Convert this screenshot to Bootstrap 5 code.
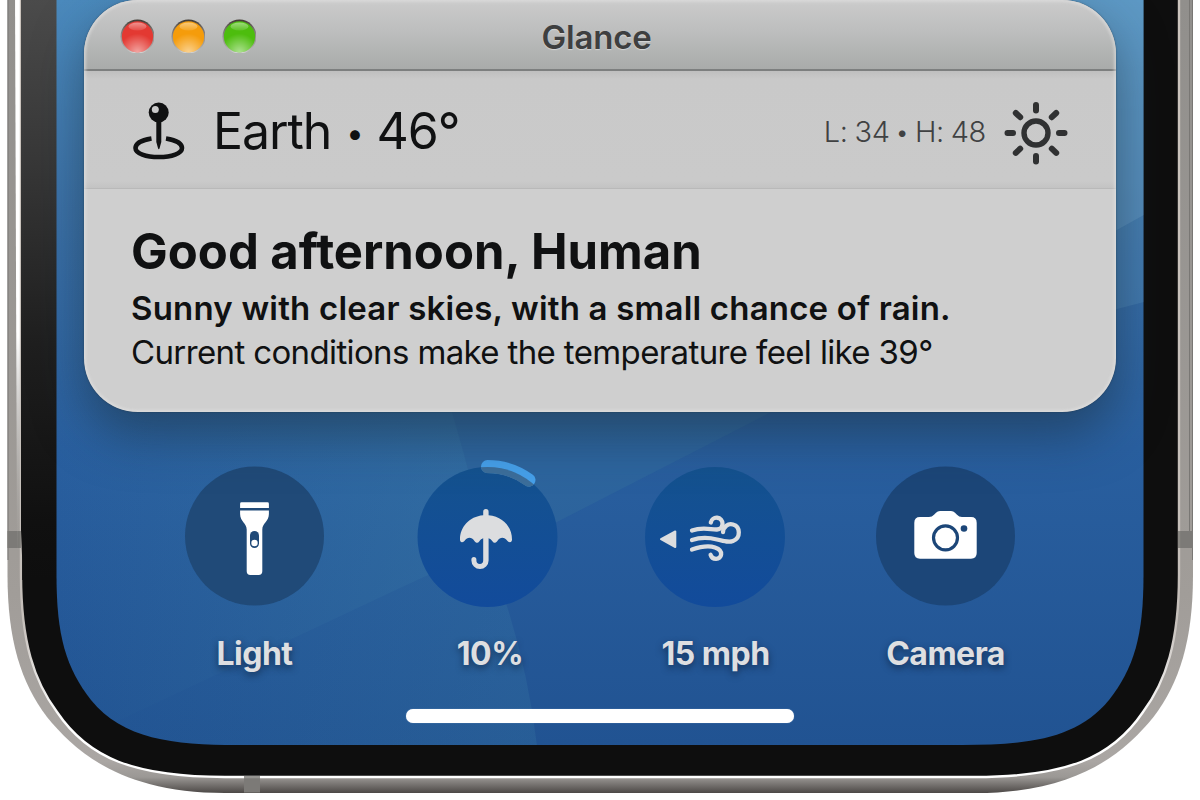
<!DOCTYPE html>
<html lang="en">
<head>
<meta charset="utf-8">
<meta name="viewport" content="width=device-width, initial-scale=1">
<title>Glance</title>
<link rel="stylesheet" href="https://cdn.jsdelivr.net/npm/bootstrap@5.3.0/dist/css/bootstrap.min.css">
<style>
  body { font-family: Inter, "Liberation Sans", sans-serif; color: #101112; background: #fff; }
  .stage { width: 1200px; height: 800px; }
  .glance { width: 1032px; height: 412px; margin-left: 84px; border-radius: 54px; background: #cfcfcf;
    box-shadow: 0 22px 50px rgba(24,42,54,.5), 0 0 2px rgba(40,60,80,.7); }
  .glance::after { content: ""; position: absolute; inset: 0; border-radius: inherit; pointer-events: none;
    box-shadow: inset 0 0 3px 2px rgba(226,226,226,.6); }
  .titlebar { height: 71px; background: linear-gradient(#cbcbcb, #bdbebe 45%, #a9abaa); border-bottom: 2px solid #7d7f7f; }
  .titlebar h1 { font-size: 33px; font-weight: 600; color: #3e3f40; letter-spacing: -.2px; text-shadow: 0 1px 1px rgba(235,235,235,.6); margin-top: 2px; padding-right: 7px; line-height: 70px; }
  .lights { left: 36px; top: 19px; gap: 17px; }
  .lamp { width: 34px; height: 34px; }
  .place { height: 118px; padding: 4px 47px 0 46px; background: linear-gradient(#bfbfbf, #c9c9c9 8px, #cacaca 94%, #c3c3c3); border-bottom: 1px solid #b9b9b9; }
  .town { font-size: 50px; letter-spacing: -1.1px; margin-left: 25px; margin-top: 5px; line-height: 60px; }
  .town .sep { font-size: 31px; letter-spacing: 0; margin: 0 0 0 2px; position: relative; top: -5px; }
  .range { font-size: 29px; letter-spacing: -.35px; word-spacing: -1px; color: #404142; font-weight: 300; margin-right: 17px; }
  .range .sep { font-size: 21px; letter-spacing: 0; position: relative; top: -2px; font-weight: 400; }
  .report { padding: 33px 47px 0; }
  .report h2 { font-size: 49px; font-weight: 700; letter-spacing: 0; line-height: 60px; }
  .outlook { font-size: 33px; font-weight: 600; letter-spacing: .2px; line-height: 44px; margin-top: 4px; }
  .feels { font-size: 33px; letter-spacing: -.63px; line-height: 44px; }
  .dials { margin-left: 134px; height: 296px; padding-top: 45px; }
  .dial svg { overflow: visible; }
  .caption-text { font-size: 32px; font-weight: 700; color: #dedfe1; line-height: 40px; margin-top: 17px; letter-spacing: -.5px; text-shadow: 0 3px 7px rgba(10,25,45,.6); }
  .home { width: 388px; height: 14px; margin-left: 406px; margin-top: 1px; box-shadow: 0 0 1px #9bb4d4; }
</style>
</head>
<body class="overflow-hidden">
<main class="stage position-relative overflow-hidden">
  <svg class="position-absolute top-0 start-0" width="1200" height="800" viewBox="0 0 1200 800" aria-hidden="true">
    <defs>
      <linearGradient id="sky" x1="0" y1="0" x2="0" y2="1">
        <stop offset="0" stop-color="#4b8abd"/><stop offset=".28" stop-color="#3c72a9"/><stop offset=".6" stop-color="#295f9f"/><stop offset="1" stop-color="#215392"/>
      </linearGradient>
      <linearGradient id="beamAcross" x1="56" y1="0" x2="470" y2="0" gradientUnits="userSpaceOnUse">
        <stop offset="0" stop-color="#448aab" stop-opacity="0"/><stop offset="1" stop-color="#448aab" stop-opacity=".3"/>
      </linearGradient>
      <linearGradient id="beamLow" x1="56" y1="0" x2="520" y2="0" gradientUnits="userSpaceOnUse">
        <stop offset="0" stop-color="#448aab" stop-opacity="0"/><stop offset="1" stop-color="#448aab" stop-opacity=".18"/>
      </linearGradient>
      <linearGradient id="bezel" x1="0" y1="0" x2="0" y2="1">
        <stop offset="0" stop-color="#4c4c4c"/><stop offset=".3" stop-color="#373737"/><stop offset=".6" stop-color="#1f1f1f"/><stop offset=".9" stop-color="#101010"/><stop offset="1" stop-color="#0e0e0e"/>
      </linearGradient>
      <linearGradient id="shine" x1="0" y1="0" x2="0" y2="560" gradientUnits="userSpaceOnUse">
        <stop offset="0" stop-color="#fff"/><stop offset=".6" stop-color="#fff"/><stop offset="1" stop-color="#aaa7a3" stop-opacity="0"/>
      </linearGradient>
      <linearGradient id="metal" x1="0" y1="0" x2="0" y2="793" gradientUnits="userSpaceOnUse">
        <stop offset="0" stop-color="#918f8c"/><stop offset=".75" stop-color="#a19d99"/><stop offset=".96" stop-color="#aaa6a3"/><stop offset=".98" stop-color="#9b9895"/><stop offset="1" stop-color="#4c4846"/>
      </linearGradient>
      <linearGradient id="rim" x1="0" y1="0" x2="0" y2="777" gradientUnits="userSpaceOnUse">
        <stop offset="0" stop-color="#cbc4bd"/><stop offset=".8" stop-color="#c5bfba"/><stop offset=".93" stop-color="#fff"/><stop offset="1" stop-color="#fff"/>
      </linearGradient>
      <clipPath id="screen"><path d="M56.500-10V575C56.500 636 66 668 91 700 123 739 172 745 238 745H962C1028 745 1077 739 1109 700 1134 668 1143.500 636 1143.500 575V-10Z"/></clipPath>
    </defs>
    <path fill="url(#metal)" d="M7.500-10V575C7.500 640 21 683 47 717 77 754 124 793 225 793H975.500C1076.500 793 1123.500 754 1153.500 717 1179.500 683 1193 640 1193 575V-10Z"/>
    <path fill="none" stroke="#797774" stroke-width="1" d="M8-10V560M1192.500-10V560M1189.500-10V540"/>
    <path fill="#7c7a77" d="M7.500 531H21v17H7.500ZM1179 531h14v17h-14ZM244 777h16v15.500h-16Z"/>
    <path fill="url(#shine)" d="M15-10H20V550H17Z"/>
    <path fill="#0e0e0e" stroke="url(#rim)" stroke-width="2.400" d="M21-10V575C21 642 34 681 57 712 88 758 134 777 225 777H975C1066 777 1112 758 1143 712 1166 681 1179 642 1179 575V-10Z"/>
    <path fill="url(#bezel)" d="M21-10H57V580H22.200V560L21 530Z"/>
    <path fill="#7c7a77" fill-opacity=".8" d="M1178 531h4v17h-4ZM18 531h3v17H18ZM244 776h16v4h-16Z"/>
    <g clip-path="url(#screen)">
      <rect x="56" width="1088" height="746" fill="url(#sky)"/>
      <path fill="url(#beamAcross)" d="M56 0H450V405Q471 476 487 548L400 588 120 720 56 745Z"/>
      <path fill="url(#beamLow)" d="M487 548Q526 650 537 746H56L120 720 400 588Z"/>
      <path fill="#77add0" fill-opacity=".42" d="M800 0H1144V215L1090 245 1000 200Z"/>
      <path fill="#69a1c8" fill-opacity=".24" d="M1090 245 1144 215V302L1090 316Z"/>
      <path fill="#4a8aa0" fill-opacity=".15" d="M450 405H785L557 522 486 548Q471 476 450 405Z"/>
    </g>
  </svg>

  <div class="position-relative">
    <section class="glance position-relative overflow-hidden">
      <header class="titlebar position-relative d-flex justify-content-center">
        <div class="lights position-absolute d-flex">
          <svg class="lamp" viewBox="0 0 34 34"><defs>
            <radialGradient id="floor" cx=".5" cy="1" r=".6"><stop stop-color="#fff" stop-opacity=".55"/><stop offset="1" stop-color="#fff" stop-opacity="0"/></radialGradient>
            <linearGradient id="gloss" x1="0" y1="0" x2="0" y2="1"><stop stop-color="#fff" stop-opacity=".45"/><stop offset="1" stop-color="#fff" stop-opacity=".1"/></linearGradient>
            <linearGradient id="edge" x1="0" y1="0" x2="0" y2="1"><stop stop-color="#302820" stop-opacity=".9"/><stop offset=".6" stop-color="#6b625d" stop-opacity=".35"/><stop offset="1" stop-color="#ddd" stop-opacity=".9"/></linearGradient></defs>
            <circle cx="17.500" cy="17.500" r="17" fill="url(#edge)"/><circle cx="17.500" cy="17.800" r="15.600" fill="#e33932"/><circle cx="17.500" cy="17.800" r="15.600" fill="url(#floor)"/><ellipse cx="17.500" cy="7.500" rx="9" ry="4" fill="url(#gloss)"/></svg>
          <svg class="lamp" viewBox="0 0 34 34"><circle cx="17.500" cy="17.500" r="17" fill="url(#edge)"/><circle cx="17.500" cy="17.800" r="15.600" fill="#f59c0b"/><circle cx="17.500" cy="17.800" r="15.600" fill="url(#floor)"/><ellipse cx="17.500" cy="7.500" rx="9" ry="4" fill="url(#gloss)"/></svg>
          <svg class="lamp" viewBox="0 0 34 34"><circle cx="17.500" cy="17.500" r="17" fill="url(#edge)"/><circle cx="17.500" cy="17.800" r="15.600" fill="#4dbd0e"/><circle cx="17.500" cy="17.800" r="15.600" fill="url(#floor)"/><ellipse cx="17.500" cy="7.500" rx="9" ry="4" fill="url(#gloss)"/></svg>
        </div>
        <h1 class="mb-0">Glance</h1>
      </header>
      <div class="place d-flex align-items-center">
        <svg width="58" height="62" viewBox="130 101 58 62"><path fill="none" stroke="#101112" stroke-width="4.600" d="M151.500 138.500C142 140 135.500 143.500 135.500 148c0 5.500 10.500 9 23.300 9S182 153.500 182 148c0-4.500-6.500-8-16-9.500"/><path fill="#101112" d="M156.300 120h5v22l-1.800 6.500q-.7 1.500-1.400 0L156.300 142Z"/><circle cx="158.700" cy="112.500" r="10" fill="#101112"/><circle cx="155.300" cy="109.500" r="3.500" fill="#cacaca"/></svg>
        <div class="town">Earth <span class="sep">•</span> 46°</div>
        <div class="range ms-auto">L: 34 <span class="sep">•</span> H: 48</div>
        <svg width="66" height="66" viewBox="1003 99.500 66 66" fill="none" stroke="#303132" stroke-linecap="round"><circle cx="1036" cy="133.500" r="12" stroke-width="5.400"/><path stroke-width="6" d="M1036 105.500v5.500M1036 156.500v5.500M1007.500 133.500h5.500M1059 133.500h5.500M1015.800 113.500l4.400 4.200M1051.800 149.200l4.400 4.200M1056.200 113.500l-4.400 4.200M1020.200 149.200l-4.400 4.200"/></svg>
      </div>
      <div class="report">
        <h2 class="mb-0"><span>Good afternoon, Human</span></h2>
        <div class="outlook"><span>Sunny with clear skies, with a small chance of rain.</span></div>
        <div class="feels"><span>Current conditions make the temperature feel like 39°</span></div>
      </div>
    </section>

    <section class="dials d-flex">
      <div class="dial text-center" style="width:241px"><svg width="140" height="160" viewBox="185 457 140 160">
        <circle cx="254.500" cy="536" r="69.500" fill="#204a78"/>
        <path fill="#fff" d="M241.500 502.300h26q1.400 0 1.400 1.400v4.300h-28.800v-4.300q0-1.400 1.400-1.400ZM240.100 510.500h28.800v3.500c0 7.500-6.600 9-6.600 15.500v41.800q0 3.700-3.700 3.700h-8.200q-3.700 0-3.700-3.700v-41.800c0-6.500-6.600-8-6.600-15.500Z"/>
        <rect x="250" y="531" width="9" height="17" rx="4.500" fill="#204a78"/><circle cx="254.500" cy="543" r="3.200" fill="#fff"/></svg>
        <div class="caption-text">Light</div></div>
      <div class="dial text-center" style="width:226px"><svg width="140" height="160" viewBox="418 457 140 160">
        <defs><linearGradient id="deep" x1="0" y1="0" x2="0" y2="1"><stop stop-color="#14528f"/><stop offset="1" stop-color="#124b9b"/></linearGradient><clipPath id="disc"><circle cx="487.500" cy="537" r="70"/></clipPath></defs>
        <circle cx="487.500" cy="537" r="70" fill="url(#deep)"/>
        <path fill="none" stroke="#46a0ea" stroke-width="13" stroke-linecap="round" d="M487.500 466.500A70.500 70.500 0 0 1 529 480"/>
        <path clip-path="url(#disc)" fill="none" stroke="#3c6e9b" stroke-width="13.400" stroke-linecap="round" d="M487.500 466.500A70.500 70.500 0 0 1 529 480"/>
        <path fill="#dcdddf" d="M483.200 515.200V511.700a2.700 2.700 0 0 1 5.400 0v3.500C503 516.500 512 527 512 539.500c0 3.200-2.600 3.500-4.500 1.500-3.500-4.200-7-4.200-10.300.2-2 2-3.400 2-4.600.3-1.400-1.800-2.500-3-4-3.300V560.500a8.600 8.600 0 0 1-17.200 0v-1a2.500 2.500 0 0 1 5 0v1a3.400 3.400 0 0 0 6.800 0V538.200c-1.500.3-2.700 1.500-4 3.300-1.300 1.700-2.700 1.700-4.600-.3-3.300-4.400-6.800-4.400-10.200-.2-2 2-4.400 1.700-4.400-1.500 0-12.500 9-23 23.200-24.300Z"/></svg>
        <div class="caption-text ps-1">10%</div></div>
      <div class="dial text-center" style="width:229px"><svg width="140" height="160" viewBox="646 457 140 160">
        <circle cx="715" cy="537" r="70" fill="url(#deep)"/>
        <path fill="#dcdddf" stroke="#dcdddf" stroke-width="2" stroke-linejoin="round" d="M661 539.200 675.300 531.500V547Z"/>
        <g fill="none" stroke="#dcdddf" stroke-width="4.300" stroke-linecap="round"><path d="M692 530.500C703 526.500 711 529.800 717 529.500a5.900 5.900 0 1 0-6.200-7"/><path d="M692 540C701 537 709 537.500 717 539.500S729 542.500 733 541c8-3 7.500-14.500 0-16.500-5-1.300-9.500 2-10 7.500"/><path d="M692 549.500C701 546.500 709 545.500 715 547.500c9.500 3.200 6.500 11.500 1 11.300-3 0-4.700-1.700-5.400-4"/></g></svg>
        <div class="caption-text">15 mph</div></div>
      <div class="dial text-center" style="width:231px"><svg width="140" height="160" viewBox="876 457 140 160">
        <circle cx="945.500" cy="536" r="69.500" fill="#1c4678"/>
        <path fill="#fff" d="M920 517h9q3 0 5-2.300l2-2q1.500-1.700 4-1.700h11q2.500 0 4 1.700l2 2q2 2.300 5 2.300h9q5.700 0 5.700 5.700v30.300q0 5.700-5.700 5.700h-51q-5.700 0-5.700-5.700v-30.300q0-5.700 5.700-5.700Z"/>
        <circle cx="945.500" cy="537.800" r="12" fill="none" stroke="#1c4678" stroke-width="3.200"/><circle cx="964" cy="528.500" r="3.300" fill="#1c4678"/></svg>
        <div class="caption-text">Camera</div></div>
    </section>
    <div class="home bg-white rounded-pill"></div>
  </div>
</main>
<script src="https://cdn.jsdelivr.net/npm/bootstrap@5.3.0/dist/js/bootstrap.bundle.min.js"></script>
</body>
</html>
